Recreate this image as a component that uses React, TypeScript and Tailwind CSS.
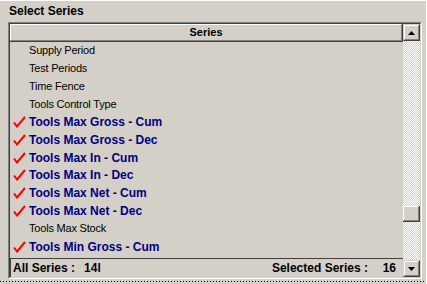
const rows = [
  { name: 'Supply Period', on: false },
  { name: 'Test Periods', on: false },
  { name: 'Time Fence', on: false },
  { name: 'Tools Control Type', on: false },
  { name: 'Tools Max Gross - Cum', on: true },
  { name: 'Tools Max Gross - Dec', on: true },
  { name: 'Tools Max In - Cum', on: true },
  { name: 'Tools Max In - Dec', on: true },
  { name: 'Tools Max Net - Cum', on: true },
  { name: 'Tools Max Net - Dec', on: true },
  { name: 'Tools Max Stock', on: false },
  { name: 'Tools Min Gross - Cum', on: true },
]

function Check() {
  return (
    <svg width="13" height="12" viewBox="0 0 13 12" className="shrink-0">
      <path d="M1 6.5 L4 10.5 L12 1" fill="none" stroke="#ff0000" strokeWidth="2" strokeLinejoin="miter" />
    </svg>
  )
}

function Arrow({ up }: { up?: boolean }) {
  return (
    <svg width="7" height="4" viewBox="0 0 7 4">
      <path d={up ? 'M3.5 0 L7 4 L0 4 Z' : 'M0 0 L7 0 L3.5 4 Z'} fill="#000" />
    </svg>
  )
}

function ScrollButton({ up }: { up?: boolean }) {
  return (
    <div className="h-[17px] w-[17px] bg-[#d4d0c8] border-t border-l border-t-[#d4d0c8] border-l-[#d4d0c8] border-b border-r border-b-[#404040] border-r-[#404040]">
      <div className="h-full w-full flex items-center justify-center border-t border-l border-t-white border-l-white border-b border-r border-b-[#808080] border-r-[#808080]">
        <Arrow up={up} />
      </div>
    </div>
  )
}

export default function App() {
  return (
    <div
      className="w-[427px] h-[284px] bg-[#d4d0c8] overflow-hidden flex flex-col border-t border-t-white border-r border-r-white"
      style={{ fontFamily: '"Liberation Sans", Arial, sans-serif' }}
    >
      <div className="h-[21px] pl-[9px] pt-[2px] text-[12px] font-bold text-black leading-[16px]">Select Series</div>

      <div className="ml-[8px] w-[414px] h-[257px] border-t border-l border-t-[#808080] border-l-[#808080] border-b border-r border-b-white border-r-white">
        <div className="h-full w-full flex border-t border-l border-t-[#404040] border-l-[#404040] border-b border-r border-b-[#d4d0c8] border-r-[#d4d0c8]">
          <div className="flex-1 flex flex-col">
            <div className="h-[18px] border-b border-r border-b-[#404040] border-r-[#404040]">
              <div className="h-full flex items-center justify-center border-t border-l border-t-white border-l-white border-b border-r border-b-[#808080] border-r-[#808080] text-[11px] font-bold text-black">
                Series
              </div>
            </div>
            <div className="flex-1 flex flex-col">
              {rows.map((r) => (
                <div key={r.name} className="h-[17.8px] flex items-center pl-[3px]">
                  <div className="w-[16px] flex items-center">{r.on ? <Check /> : null}</div>
                  {r.on ? (
                    <span className="text-[12px] font-bold text-[#000080] leading-none">{r.name}</span>
                  ) : (
                    <span className="text-[11px] text-black leading-none tracking-[-0.2px]">{r.name}</span>
                  )}
                </div>
              ))}
            </div>
            <div className="h-[19px] border-t border-l border-t-[#404040] border-l-[#404040] flex items-center justify-between pl-[2px] pr-[7px] text-[12px] font-bold text-black">
              <span>
                All Series :<span className="inline-block w-[9px]" />14l
              </span>
              <span>
                Selected Series :<span className="inline-block w-[28px] text-right">16</span>
              </span>
            </div>
          </div>

          <div className="w-[17px] flex flex-col">
            <ScrollButton up />
            <div className="flex-1 flex flex-col bg-[repeating-conic-gradient(#d4d0c8_0_25%,#ffffff_0_50%)] bg-[length:2px_2px]">
              <div className="h-[165px]" />
              <div className="h-[16px] w-[17px] bg-[#d4d0c8] border-b border-r border-b-[#404040] border-r-[#404040]">
                <div className="h-full w-full border-t border-l border-t-white border-l-white border-b border-r border-b-[#808080] border-r-[#808080]" />
              </div>
            </div>
            <ScrollButton />
          </div>
        </div>
      </div>

      <div className="mt-[2px] h-px w-full bg-[repeating-linear-gradient(90deg,#000_0_1px,transparent_1px_3px)]" />
    </div>
  )
}
